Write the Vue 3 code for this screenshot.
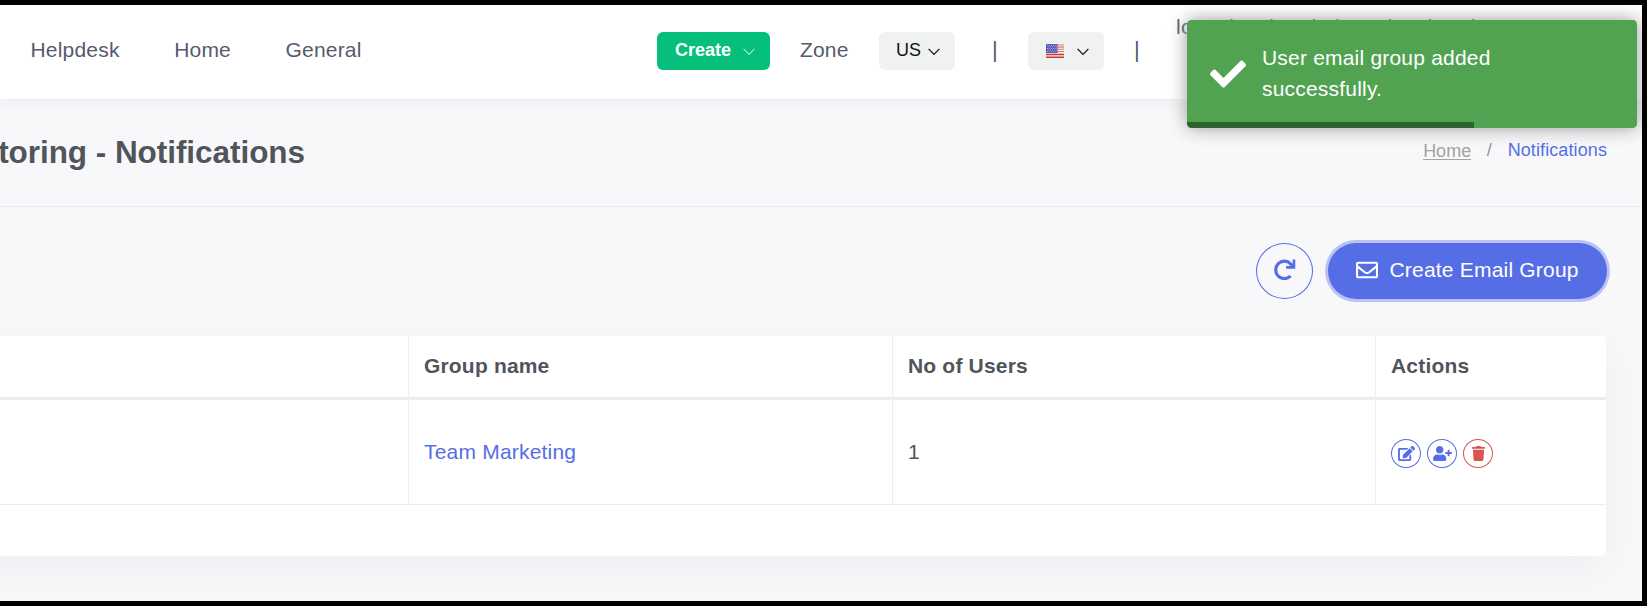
<script setup>
const leftNav = ['Helpdesk', 'Home', 'General']
const account = 'loganiest handa loganiest handa'
const stars = []
for (let r = 0; r < 5; r++) for (let c = 0; c < 5; c++) stars.push({ x: 1 + c * 2.1 + (r % 2) * 0.8, y: 0.8 + r * 1.6 })
</script>

<template>
  <div class="frame">
    <div class="page">
      <header class="topbar">
        <nav class="nav">
          <a v-for="n in leftNav" :key="n">{{ n }}</a>
        </nav>
        <div class="tools">
          <button class="btn create">
            <span>Create</span>
            <svg class="chev" viewBox="0 0 12 8"><path d="M.6 .8 6 6.4 11.4 .8" /></svg>
          </button>
          <span class="zone">Zone</span>
          <button class="btn grey us">
            <span>US</span>
            <svg class="chev" viewBox="0 0 12 8"><path d="M.6 .8 6 6.4 11.4 .8" /></svg>
          </button>
          <span class="bar bar1">|</span>
          <button class="btn grey lang">
            <svg class="flag" viewBox="0 0 18 14">
              <rect width="18" height="14" fill="#f5eeee" />
              <path d="M0 1H18M0 3.1H18M0 5.3H18M0 7.5H18" stroke="#e57a7a" stroke-width="1.1" />
              <path d="M0 10.5H18M0 13.2H18" stroke="#cf3535" stroke-width="1.4" />
              <rect width="11.5" height="9" fill="#5555b5" />
              <rect v-for="(s, i) in stars" :key="i" :x="s.x" :y="s.y" width=".9" height=".9" fill="#c5c5ee" />
            </svg>
            <svg class="chev" viewBox="0 0 12 8"><path d="M.6 .8 6 6.4 11.4 .8" /></svg>
          </button>
          <span class="bar bar2">|</span>
          <span class="account">{{ account }}</span>
        </div>
      </header>

      <section class="heading">
        <h1><span>toring - Notifications</span></h1>
        <div class="crumbs">
          <a class="home">Home</a><span class="slash">/</span><a class="current">Notifications</a>
        </div>
      </section>

      <div class="actions">
        <button class="refresh">
          <svg viewBox="0 0 22 21">
            <path d="M16.6 17A8.7 8.7 0 1 1 16.6 4.8L18.8 7" fill="none" stroke="#556ee6" stroke-width="3.2" />
            <path d="M18.600.5H21.300V9.700H12.100V6.900H18.600Z" fill="#556ee6" />
          </svg>
        </button>
        <button class="primary">
          <svg viewBox="0 0 512 512"><path fill="#fff" d="M464 64H48C21.49 64 0 85.49 0 112v288c0 26.51 21.49 48 48 48h416c26.51 0 48-21.49 48-48V112c0-26.51-21.49-48-48-48zm0 48v40.805c-22.422 18.259-58.168 46.651-134.587 106.49-16.841 13.247-50.201 45.072-73.413 44.701-23.208.375-56.579-31.459-73.413-44.701C106.18 199.465 70.425 171.067 48 152.805V112h416zM48 400V214.398c22.914 18.251 55.409 43.862 104.938 82.646 21.857 17.205 60.134 55.186 103.062 54.955 42.717.231 80.509-37.199 103.053-54.947 49.528-38.783 82.032-64.401 104.947-82.653V400H48z" /></svg>
          <span>Create Email Group</span>
        </button>
      </div>

      <div class="card">
        <div class="row head">
          <div class="cell"></div>
          <div class="cell">Group name</div>
          <div class="cell">No of Users</div>
          <div class="cell">Actions</div>
        </div>
        <div class="row body">
          <div class="cell"></div>
          <div class="cell"><a class="link">Team Marketing</a></div>
          <div class="cell">1</div>
          <div class="cell icons">
            <button class="ic">
              <svg viewBox="0 0 576 512" width="17" height="15"><path fill="currentColor" d="M402.6 83.200l90.200 90.200c3.800 3.800 3.800 10 0 13.800L274.400 405.600l-92.800 10.300c-12.400 1.400-22.900-9.100-21.500-21.500l10.300-92.800L388.800 83.200c3.800-3.800 10-3.800 13.800 0zm162-22.900l-48.800-48.800c-15.200-15.200-39.900-15.200-55.200 0l-35.400 35.400c-3.800 3.800-3.800 10 0 13.800l90.200 90.200c3.800 3.800 10 3.800 13.800 0l35.400-35.400c15.200-15.300 15.200-40 0-55.200zM384 346.200V448H64V128h229.800c3.200 0 6.200-1.300 8.500-3.500l40-40c7.600-7.600 2.200-20.500-8.500-20.500H48C21.500 64 0 85.500 0 112v352c0 26.500 21.500 48 48 48h352c26.500 0 48-21.500 48-48V306.200c0-10.700-12.900-16-20.500-8.500l-40 40c-2.200 2.300-3.500 5.300-3.500 8.500z" /></svg>
            </button>
            <button class="ic">
              <svg viewBox="0 0 640 512" width="19" height="15"><path fill="currentColor" d="M624 208h-64v-64c0-8.800-7.200-16-16-16h-32c-8.800 0-16 7.200-16 16v64h-64c-8.800 0-16 7.200-16 16v32c0 8.800 7.200 16 16 16h64v64c0 8.800 7.200 16 16 16h32c8.800 0 16-7.200 16-16v-64h64c8.800 0 16-7.200 16-16v-32c0-8.800-7.200-16-16-16zm-400 48c70.700 0 128-57.300 128-128S294.700 0 224 0 96 57.300 96 128s57.300 128 128 128zm89.600 32h-16.700c-22.200 10.200-46.900 16-72.900 16s-50.600-5.800-72.900-16h-16.700C60.200 288 0 348.200 0 422.400V464c0 26.500 21.500 48 48 48h352c26.500 0 48-21.500 48-48v-41.600c0-74.200-60.200-134.400-134.400-134.400z" /></svg>
            </button>
            <button class="ic red">
              <svg viewBox="0 0 448 512" width="13" height="15"><path fill="currentColor" d="M432 32H312l-9.400-18.700A24 24 0 0 0 281.100 0H166.800a23.700 23.700 0 0 0-21.400 13.300L136 32H16A16 16 0 0 0 0 48v32a16 16 0 0 0 16 16h416a16 16 0 0 0 16-16V48a16 16 0 0 0-16-16zM32 128l21.200 339a48 48 0 0 0 47.900 45h245.800a48 48 0 0 0 47.900-45L416 128z" /></svg>
            </button>
          </div>
        </div>
      </div>

      <div class="toast">
        <svg class="check" viewBox="0 0 512 512"><path fill="#fff" d="M173.898 439.404l-166.400-166.400c-9.997-9.997-9.997-26.206 0-36.204l36.203-36.204c9.997-9.998 26.207-9.998 36.204 0L192 312.690 432.095 72.596c9.997-9.997 26.207-9.997 36.204 0l36.203 36.204c9.997 9.997 9.997 26.206 0 36.204l-294.400 294.401c-9.998 9.997-26.207 9.997-36.204-.001z" /></svg>
        <p>User email group added successfully.</p>
        <div class="progress"></div>
      </div>
    </div>
  </div>
</template>

<style>
body { margin: 0; background: #000; overflow: hidden; }
</style>

<style scoped>
* { box-sizing: border-box; }
.frame { height: 606px; padding: 5px 5px 5px 0; background: #000; font-family: "Liberation Sans", Arial, sans-serif; font-size: 21px; color: #50555b; }
.page { position: relative; width: 1642px; height: 596px; overflow: hidden; background: #f8f8fb; }
button { font-family: inherit; padding: 0; margin: 0; border: 0; }
svg { display: block; flex: none; }
.topbar { height: 94px; background: #fff; display: flex; align-items: flex-start; box-shadow: 0 1px 15px rgba(18, 38, 63, .07); color: #555b6d; white-space: nowrap; }
.nav { display: flex; width: 657px; padding: 33px 0 0 30.5px; gap: 54.5px; line-height: 24px; letter-spacing: .2px; }
.tools { display: flex; align-items: flex-start; }
.btn { height: 38px; margin-top: 27px; border-radius: 6px; display: flex; align-items: center; font-size: 18px; padding-bottom: 2px; }
.create { width: 113px; background: #06bf7b; color: #fff; font-weight: bold; padding-left: 18px; gap: 12px; }
.create .chev { stroke-width: 1; }
.chev { width: 12px; height: 8px; margin-top: 3px; fill: none; stroke: currentColor; stroke-width: 1.2; }
.zone { width: 109px; padding: 33px 0 0 30px; line-height: 24px; letter-spacing: .15px; }
.grey { width: 76px; background: #eff2f1; color: #111; }
.us { padding-left: 17px; gap: 7px; }
.lang { padding-left: 18px; gap: 13px; }
.flag { width: 18px; height: 14px; margin-top: 2px; }
.bar { line-height: 24px; padding-top: 33px; font-size: 22px; }
.bar1 { width: 73px; padding-left: 37px; }
.bar2 { width: 72px; padding-left: 30px; }
.account { padding-top: 10px; line-height: 24px; letter-spacing: .3px; }
.heading { height: 108px; border-bottom: 1px solid #e9e9ee; display: flex; justify-content: space-between; white-space: nowrap; }
h1 { margin: 0; width: 305px; display: flex; justify-content: flex-end; font-size: 31.5px; line-height: 36px; padding-top: 35px; letter-spacing: -.05px; }
.crumbs { display: flex; padding: 40px 35px 0 0; font-size: 18px; line-height: 22px; }
.home { color: #a3a3a3; text-decoration: underline; text-underline-offset: 2px; padding-top: 1px; }
.slash { color: #8f959c; padding: 0 16px 0 15.5px; }
.current { color: #556ee6; letter-spacing: .1px; }
.actions { display: flex; justify-content: flex-end; gap: 15px; padding: 36px 35px 0 0; }
.refresh { width: 57px; height: 56px; border: 1px solid #556ee6; border-radius: 50%; background: transparent; display: flex; align-items: center; justify-content: center; }
.refresh svg { width: 22px; height: 21px; margin-top: -3px; }
.primary { width: 279px; height: 56px; border-radius: 28px; background: #556ee6; color: #fff; box-shadow: 0 0 0 3px #b9c2f2; font-size: 21px; display: flex; align-items: center; padding: 0 0 2px 27.5px; gap: 12px; white-space: nowrap; letter-spacing: .2px; }
.primary svg { width: 22px; height: 22px; }
.card { width: 1686px; height: 220px; margin: 37px 0 0 -80px; background: #fff; border-radius: 5px; box-shadow: 0 12px 45px rgba(30, 30, 45, .045); }
.row { display: grid; grid-template-columns: 488px 484px 483px 231px; }
.head { height: 64px; border-bottom: 3px solid #ededee; font-weight: bold; letter-spacing: .18px; }
.body { height: 105px; border-bottom: 1px solid #ededee; }
.cell { display: flex; align-items: center; padding-left: 15px; padding-bottom: 1px; }
.cell + .cell { border-left: 1px solid #ededee; }
.link { color: #556ee6; letter-spacing: .2px; }
.icons { gap: 6px; padding-bottom: 0; padding-top: 2px; }
.ic { width: 30px; height: 29px; border: 1px solid #556ee6; border-radius: 50%; background: #fff; color: #556ee6; display: flex; align-items: center; justify-content: center; }
.red { color: #d9534f; border-color: #d9534f; }
.toast { position: absolute; left: 1187px; top: 15px; width: 450px; height: 108px; border-radius: 4.5px; background: #51a351; color: #fff; box-shadow: 0 0 18px #999; overflow: hidden; display: flex; padding: 22px 90px 0 23px; }
.check { width: 36px; height: 36px; margin-top: 14px; }
.toast p { margin: 0 0 0 16px; line-height: 31px; width: 260px; letter-spacing: .2px; }
.progress { position: absolute; left: 0; bottom: 0; width: 287px; height: 6px; background: #000; opacity: .4; }
</style>
